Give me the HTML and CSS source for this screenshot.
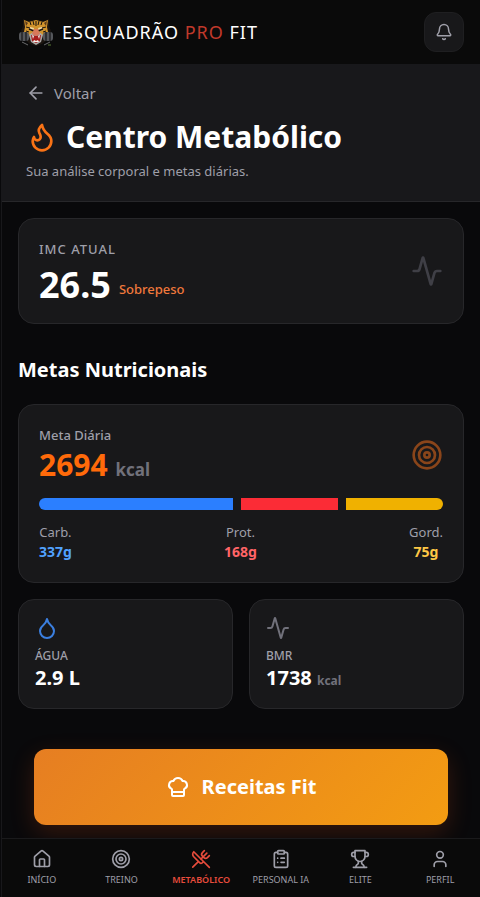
FILE: index.html
```
<!DOCTYPE html>
<html lang="pt-BR">
<head>
    <meta charset="UTF-8">
    <meta name="viewport" content="width=device-width, initial-scale=1.0">
    <title>Esquadrão Pro Fit - Centro Metabólico</title>
    <link rel="stylesheet" href="styles.css">
</head>
<body>

<div class="app">
    <header class="topbar">
        <div class="brand">
            <svg class="brand-logo" viewBox="0 0 36 30" aria-hidden="true">
                <path d="M5 2l5 2 8-1 8 1 5-2v7l2 5-3 8-6 5-6 2-6-2-6-5-3-8 2-5z" fill="#1c1510"/>
                <path d="M6 3l5 2 7-2 7 2 5-2-1 7 1 5-4 3H10l-4-3 1-5z" fill="#cf922c"/>
                <path d="M7 4l3 2-2 3zM29 4l-3 2 2 3z" fill="#5b3a1c"/>
                <path d="M12 10l4 1-1 3-4-1zM24 10l-4 1 1 3 4-1z" fill="#f0dba8"/>
                <path d="M18 4v5M15 4l1 4M21 4l-1 4M12 5l1 3M24 5l-1 3M8 10l4 1M28 10l-4 1M8 14l3 1M28 14l-3 1" fill="none" stroke="#18120d"/>
                <path d="M11 12l5 2M25 12l-5 2" stroke="#18120d" stroke-width="1.500"/>
                <rect x="1" y="15" width="10" height="9" rx="3" fill="#55575b"/>
                <rect x="25" y="15" width="10" height="9" rx="3" fill="#55575b"/>
                <path d="M4 15v9M8 15v9M28 15v9M32 15v9" stroke="#222326" stroke-width="1.500"/>
                <path d="M11 18l4-3h6l4 3-2 7-5 3-5-3z" fill="#aaa8a5"/>
                <path d="M16 12h4l2 5-4 2-4-2z" fill="#d8795a"/>
                <path d="M13 18l5 1 5-1-1 6-4 2-4-2z" fill="#a81c1c"/>
                <path d="M14 18l1 4 1-3M22 18l-1 4-1-3M15 25l1-2 2 1 2-1 1 2" fill="#f4f1ea"/>
                <path d="M4 25l6 3M32 25l-6 3" stroke="#6a6a6c"/>
                <path d="M30 28h3" stroke="#5c7a35"/>
            </svg>
            <span class="brand-name">ESQUADRÃO <span class="brand-accent">PRO</span> FIT</span>
        </div>
        <button class="bell" type="button" aria-label="Notificações">
            <svg class="icon" width="18" height="18" viewBox="0 0 24 24">
                <path d="M10.268 21a2 2 0 0 0 3.464 0"/>
                <path d="M3.262 15.326A1 1 0 0 0 4 17h16a1 1 0 0 0 .74-1.673C19.41 13.956 18 12.499 18 8A6 6 0 0 0 6 8c0 4.499-1.411 5.956-2.738 7.326"/>
            </svg>
        </button>
    </header>

    <section class="hero">
        <a class="back" href="#">
            <svg class="icon" width="20" height="20" viewBox="0 0 24 24"><path d="m12 19-7-7 7-7"/><path d="M19 12H5"/></svg>
            Voltar
        </a>
        <h1 class="title">
            <svg class="icon icon-flame" width="32" height="32" viewBox="0 0 24 24"><path d="M8.5 14.5A2.5 2.5 0 0 0 11 12c0-1.38-.5-2-1-3-1.072-2.143-.224-4.054 2-6 .5 2.5 2 4.9 4 6.5 2 1.6 3 3.5 3 5.5a7 7 0 1 1-14 0c0-1.153.433-2.294 1-3a2.5 2.5 0 0 0 2.5 2.5z"/></svg>
            Centro Metabólico
        </h1>
        <p class="subtitle">Sua análise corporal e metas diárias.</p>
    </section>

    <main class="content">
        <section class="card card-imc">
            <div>
                <p class="label label-upper">IMC ATUAL</p>
                <p class="imc"><strong class="imc-value">26.5</strong> <span class="imc-status">Sobrepeso</span></p>
            </div>
            <svg class="icon icon-dim" width="32" height="32" viewBox="0 0 24 24"><path d="M22 12h-2.48a2 2 0 0 0-1.93 1.46l-2.35 8.36a.25.25 0 0 1-.48 0L9.24 2.18a.25.25 0 0 0-.48 0l-2.35 8.36A2 2 0 0 1 4.49 12H2"/></svg>
        </section>

        <h2 class="section-title">Metas Nutricionais</h2>

        <section class="card">
            <div class="goal">
                <div>
                    <p class="label">Meta Diária</p>
                    <p class="goal-value">2694 <span class="goal-unit">kcal</span></p>
                </div>
                <svg class="icon icon-target" width="32" height="32" viewBox="0 0 24 24"><circle cx="12" cy="12" r="10"/><circle cx="12" cy="12" r="6"/><circle cx="12" cy="12" r="2"/></svg>
            </div>
            <div class="bar">
                <div class="bar-part carb"></div>
                <div class="bar-part prot"></div>
                <div class="bar-part fat"></div>
            </div>
            <dl class="macros">
                <div class="macro"><dt>Carb.</dt><dd class="carb-text">337g</dd></div>
                <div class="macro"><dt>Prot.</dt><dd class="prot-text">168g</dd></div>
                <div class="macro"><dt>Gord.</dt><dd class="fat-text">75g</dd></div>
            </dl>
        </section>

        <div class="stats">
            <section class="card stat">
                <svg class="icon icon-water" width="24" height="24" viewBox="0 0 24 24"><path d="M12 22a7 7 0 0 0 7-7c0-2-1-3.900-3-5.500s-3.500-4-4-6.500c-.5 2.500-2 4.900-4 6.500C6 11.100 5 13 5 15a7 7 0 0 0 7 7z"/></svg>
                <p class="stat-label">ÁGUA</p>
                <p class="stat-value">2.9 L</p>
            </section>
            <section class="card stat">
                <svg class="icon icon-bmr" width="24" height="24" viewBox="0 0 24 24"><path d="M22 12h-2.48a2 2 0 0 0-1.93 1.46l-2.35 8.36a.25.25 0 0 1-.48 0L9.24 2.18a.25.25 0 0 0-.48 0l-2.35 8.36A2 2 0 0 1 4.49 12H2"/></svg>
                <p class="stat-label">BMR</p>
                <p class="stat-value">1738 <span class="stat-unit">kcal</span></p>
            </section>
        </div>

        <button class="recipes" type="button">
            <svg class="icon" width="24" height="24" viewBox="0 0 24 24"><path d="M17 21a1 1 0 0 0 1-1v-5.350c0-.457.316-.844.727-1.041a4 4 0 0 0-2.134-7.589 5 5 0 0 0-9.186 0 4 4 0 0 0-2.134 7.588c.411.198.727.585.727 1.041V20a1 1 0 0 0 1 1Z"/><path d="M6 17h12"/></svg>
            Receitas Fit
        </button>
    </main>

    <nav class="tabs">
        <a class="tab" href="#">
            <svg class="icon" width="20" height="20" viewBox="0 0 24 24"><path d="M15 21v-8a1 1 0 0 0-1-1h-4a1 1 0 0 0-1 1v8"/><path d="M3 10a2 2 0 0 1 .709-1.528l7-5.999a2 2 0 0 1 2.582 0l7 5.999A2 2 0 0 1 21 10v9a2 2 0 0 1-2 2H5a2 2 0 0 1-2-2z"/></svg>
            INÍCIO
        </a>
        <a class="tab" href="#">
            <svg class="icon" width="20" height="20" viewBox="0 0 24 24"><circle cx="12" cy="12" r="10"/><circle cx="12" cy="12" r="6"/><circle cx="12" cy="12" r="2"/></svg>
            TREINO
        </a>
        <a class="tab active" href="#" aria-current="page">
            <svg class="icon" width="20" height="20" viewBox="0 0 24 24"><path d="m16 2-2.300 2.300a3 3 0 0 0 0 4.200l1.800 1.800a3 3 0 0 0 4.200 0L22 8"/><path d="M15 15 3.300 3.300a4.200 4.200 0 0 0 0 6l7.300 7.300c.7.700 2 .7 2.800 0L15 15Zm0 0 7 7"/><path d="m2.100 21.800 6.400-6.300"/><path d="m19 5-7 7"/></svg>
            METABÓLICO
        </a>
        <a class="tab" href="#">
            <svg class="icon" width="20" height="20" viewBox="0 0 24 24"><rect x="8" y="2" width="8" height="4" rx="1"/><path d="M16 4h2a2 2 0 0 1 2 2v14a2 2 0 0 1-2 2H6a2 2 0 0 1-2-2V6a2 2 0 0 1 2-2h2"/><path d="M12 11h4M12 16h4M8 11h.01M8 16h.01"/></svg>
            PERSONAL IA
        </a>
        <a class="tab" href="#">
            <svg class="icon" width="20" height="20" viewBox="0 0 24 24"><path d="M6 9H4.500a2.500 2.500 0 0 1 0-5H6"/><path d="M18 9h1.500a2.500 2.500 0 0 0 0-5H18"/><path d="M4 22h16"/><path d="M10 14.660V17c0 .55-.47.980-.97 1.210C7.850 18.750 7 20.240 7 22"/><path d="M14 14.660V17c0 .55.47.980.97 1.210C16.150 18.750 17 20.240 17 22"/><path d="M18 2H6v7a6 6 0 0 0 12 0V2Z"/></svg>
            ELITE
        </a>
        <a class="tab" href="#">
            <svg class="icon" width="20" height="20" viewBox="0 0 24 24"><path d="M19 21v-2a4 4 0 0 0-4-4H9a4 4 0 0 0-4 4v2"/><circle cx="12" cy="7" r="4"/></svg>
            PERFIL
        </a>
    </nav>
</div>

</body>
</html>
```
FILE: styles.css
```
* {
    box-sizing: border-box;
}
body {
    margin: 0;
    background: #09090b;
    color: #fff;
    font-family: "Segoe UI", "Noto Sans", "Open Sans", sans-serif;
}
h1, h2, p, dl, dd {
    margin: 0;
}
a {
    color: inherit;
    text-decoration: none;
}
button {
    font-family: inherit;
    cursor: pointer;
}
.icon {
    display: block;
    flex-shrink: 0;
    fill: none;
    stroke: currentColor;
    stroke-width: 2;
    stroke-linecap: round;
    stroke-linejoin: round;
}
.app {
    min-height: 100vh;
    margin-left: 1px;
    padding-bottom: 56px;
    border-left: 1px solid #18181b;
}

/* topo */
.topbar {
    display: flex;
    align-items: center;
    justify-content: space-between;
    height: 64px;
    padding: 0 16px;
    background: #0a0a0a;
}
.brand {
    display: flex;
    align-items: center;
    gap: 8px;
}
.brand-logo {
    width: 36px;
    height: 30px;
}
.brand-name {
    font-size: 18px;
    line-height: 28px;
    letter-spacing: 1px;
}
.brand-accent {
    color: #c0392b;
}
.bell {
    display: flex;
    align-items: center;
    justify-content: center;
    width: 40px;
    height: 40px;
    padding: 0;
    border: 1px solid #1f1f21;
    border-radius: 12px;
    background: #18181a;
    color: #9f9fa9;
}

/* cabeçalho da página */
.hero {
    padding: 16px 24px 18px;
    background: #18181b;
    border-bottom: 1px solid #27272a;
}
.back {
    display: flex;
    align-items: center;
    gap: 8px;
    width: fit-content;
    font-size: 15px;
    line-height: 26px;
    color: #9f9fa9;
}
.title {
    display: flex;
    align-items: center;
    gap: 8px;
    margin-top: 12px;
    font-size: 30px;
    line-height: 37px;
    font-weight: 700;
}
.icon-flame {
    color: #f97316;
}
.subtitle {
    margin-top: 4px;
    font-size: 13px;
    line-height: 24px;
    color: #9f9fa9;
}

/* conteúdo */
.content {
    padding: 16px;
}
.card {
    padding: 20px;
    background: #18181a;
    border: 1px solid #27272a;
    border-radius: 16px;
}
.card-imc {
    display: flex;
    align-items: center;
    justify-content: space-between;
}
.label {
    font-size: 13px;
    line-height: 20px;
    font-weight: 500;
    color: #9f9fa9;
}
.label-upper {
    letter-spacing: 1px;
}
.imc {
    display: flex;
    align-items: flex-end;
    gap: 8px;
    margin-top: 8px;
}
.imc-value {
    font-size: 36px;
    line-height: 36px;
}
.imc-status {
    font-size: 13px;
    line-height: 28px;
    font-weight: 500;
    color: #f0783c;
}
.icon-dim {
    color: #3f3f46;
}
.section-title {
    margin: 32px 0 20px;
    font-size: 20px;
    line-height: 28px;
    font-weight: 700;
}
.goal {
    display: flex;
    align-items: center;
    justify-content: space-between;
}
.goal-value {
    font-size: 30px;
    line-height: 40px;
    font-weight: 700;
    color: #ff6a0a;
}
.goal-unit {
    font-size: 17px;
    line-height: 20px;
    color: #71717b;
}
.icon-target {
    color: #8a451a;
}
.bar {
    display: flex;
    gap: 8px;
    height: 12px;
    margin-top: 13px;
    border-radius: 6px;
    overflow: hidden;
}
.bar-part {
    flex: 1;
}
.carb {
    flex: 2;
    background: #2b7fff;
}
.prot {
    background: #fb2c36;
}
.fat {
    background: #f0b100;
}
.macros {
    display: flex;
    justify-content: space-between;
    margin-top: 12px;
    font-size: 13px;
    line-height: 20px;
    text-align: center;
}
.macro dt {
    color: #9f9fa9;
}
.macro dd {
    font-size: 14px;
    font-weight: 700;
}
.macro .carb-text {
    color: #51a2ff;
}
.macro .prot-text {
    color: #ff6467;
}
.macro .fat-text {
    color: #fdc745;
}
.stats {
    display: grid;
    grid-template-columns: 1fr 1fr;
    gap: 16px;
    margin-top: 16px;
}
.stat {
    padding: 16px;
}
.icon-water {
    color: #3b7fe0;
}
.icon-bmr {
    color: #71717b;
}
.stat-label {
    margin-top: 8px;
    font-size: 12px;
    line-height: 16px;
    font-weight: 500;
    color: #9f9fa9;
}
.stat-value {
    font-size: 20px;
    line-height: 28px;
    font-weight: 700;
}
.stat-unit {
    font-size: 12px;
    line-height: 16px;
    color: #71717b;
}
.recipes {
    display: flex;
    align-items: center;
    justify-content: center;
    gap: 12px;
    width: calc(100% - 32px);
    margin: 40px 16px 0;
    padding: 24px;
    border: 0;
    border-radius: 12px;
    background: linear-gradient(135deg, #e67e22, #f39c12);
    box-shadow: 0 8px 24px rgba(230, 80, 20, 0.2);
    color: #fff;
    font-size: 20px;
    line-height: 28px;
    font-weight: 700;
}

/* menu inferior */
.tabs {
    position: fixed;
    left: 2px;
    right: 0;
    bottom: 0;
    display: grid;
    grid-template-columns: repeat(6, minmax(0, 1fr));
    padding: 10px 0;
    background: #0a0a0a;
    border-top: 1px solid #1a1a1c;
}
.tab {
    display: flex;
    flex-direction: column;
    align-items: center;
    gap: 4px;
    font-size: 9px;
    line-height: 14px;
    color: #9f9fa9;
    white-space: nowrap;
}
.tab.active {
    color: #e74c3c;
    font-weight: 600;
}
```
